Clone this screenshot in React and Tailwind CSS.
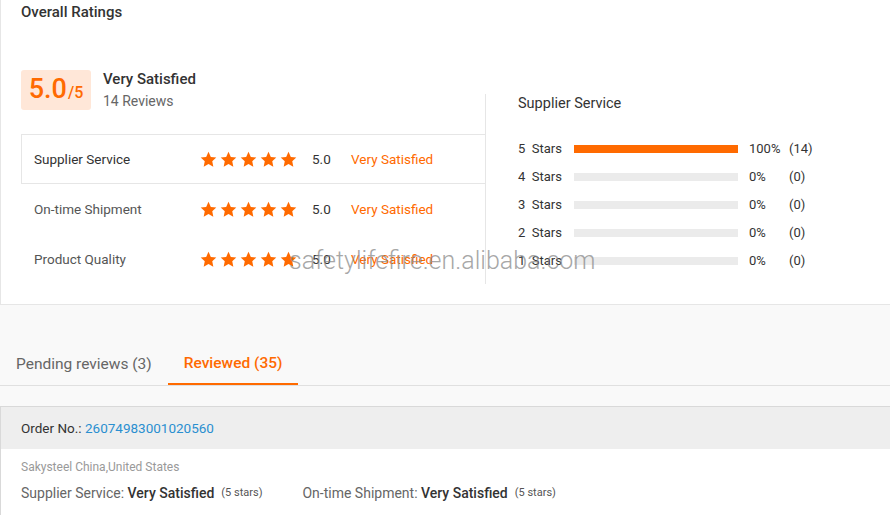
import React from 'react';

const categories = [
  { name: 'Supplier Service', score: '5.0', label: 'Very Satisfied', boxed: true },
  { name: 'On-time Shipment', score: '5.0', label: 'Very Satisfied' },
  { name: 'Product Quality', score: '5.0', label: 'Very Satisfied' },
];

const breakdown = [
  { stars: 5, pct: 100, count: 14 },
  { stars: 4, pct: 0, count: 0 },
  { stars: 3, pct: 0, count: 0 },
  { stars: 2, pct: 0, count: 0 },
  { stars: 1, pct: 0, count: 0 },
];

function Star() {
  return (
    <svg width="17" height="17" viewBox="0 0 24 24" className="shrink-0">
      <path
        fill="#ff6a00"
        d="M12 1.2l3.3 7.1 7.7.9-5.7 5.3 1.5 7.7L12 18.4l-6.8 3.8 1.5-7.7L1 9.2l7.7-.9z"
      />
    </svg>
  );
}

function CategoryRow({ item }) {
  return (
    <div
      className={
        'flex items-center h-[50px] text-[13.5px] ' +
        (item.boxed ? 'border border-[#e6e6e6] pl-[12px]' : 'pl-[13px]')
      }
    >
      <span className={'w-[166px] ' + (item.boxed ? 'text-[#333]' : 'text-[#555]')}>{item.name}</span>
      <div className="flex gap-[3px]">
        {[0, 1, 2, 3, 4].map((i) => (
          <Star key={i} />
        ))}
      </div>
      <span className="ml-[15px] w-[39px] text-[#333]">{item.score}</span>
      <span className="text-[#ff6a00]">{item.label}</span>
    </div>
  );
}

export default function App() {
  return (
    <div className="w-[890px] h-[515px] overflow-hidden bg-[#f9f9f9] relative" style={{ fontFamily: 'Roboto, "Liberation Sans", sans-serif' }}>
      {/* top rating card */}
      <div className="bg-white border-l border-b border-[#e6e6e6] h-[305px]">
        <h2 className="pl-[20px] pt-[2px] text-[15px] leading-5 font-medium text-[#333]">Overall Ratings</h2>
        <div className="flex items-start">
          <div className="ml-[20px] mt-[48px] w-[465px]">
            <div className="flex items-start">
              <div className="w-[70px] h-[40px] rounded-[3px] bg-[#ffe7d8] flex items-baseline justify-center pt-[3px] text-[#ff6a00] font-medium">
                <span className="text-[27px] leading-[32px]">5.0</span>
                <span className="text-[16px] ml-[1px]">/5</span>
              </div>
              <div className="ml-[12px] -mt-[1px]">
                <div className="text-[15px] leading-[20px] font-medium text-[#333]">Very Satisfied</div>
                <div className="text-[14px] leading-[20px] mt-[2px] text-[#666]">14 Reviews</div>
              </div>
            </div>
            <div className="mt-[23px]">
              {categories.map((c) => (
                <CategoryRow key={c.name} item={c} />
              ))}
            </div>
          </div>
          <div className="mt-[72px] -ml-[1px] h-[190px] border-l border-[#e6e6e6] pl-[32px]">
            <div className="text-[14.5px] leading-[18px] pt-[1px] text-[#333]">Supplier Service</div>
            <div className="mt-[22px]">
              {breakdown.map((b) => (
                <div key={b.stars} className="flex items-center h-[28px] text-[13px] text-[#333]">
                  <span className="w-[56px] whitespace-pre">{b.stars + '  Stars'}</span>
                  <div className="w-[164px] h-[8px] bg-[#ebebeb]">
                    <div className="h-full bg-[#ff6a00]" style={{ width: b.pct + '%' }} />
                  </div>
                  <span className="ml-[11px] w-[40px]">{b.pct}%</span>
                  <span>({b.count})</span>
                </div>
              ))}
            </div>
          </div>
        </div>
      </div>

      {/* tabs */}
      <div className="pt-[36px] border-b border-[#e0e0e0] flex text-[15.5px]">
        <div className="pl-[16px] pr-[16px] pt-[3px] h-[44px] flex items-center text-[#666]">Pending reviews (3)</div>
        <div className="px-[16px] pt-[3px] h-[44px] flex items-center font-medium text-[#ff6a00] border-b-2 border-[#ff6a00] -mb-[1px]">
          Reviewed (35)
        </div>
      </div>

      {/* order card */}
      <div className="mt-[20px] bg-white border-t border-l border-[#d9d9d9]">
        <div className="h-[42px] bg-[#eeeeee] flex items-center pl-[20px] text-[13.5px] text-[#333]">
          Order No.:&nbsp;<span className="text-[#2a8fd0]">26074983001020560</span>
        </div>
        <div className="pl-[20px] pt-[11px] pb-[20px]">
          <div className="text-[12px] leading-[14px] text-[#999]">Sakysteel China,United States</div>
          <div className="flex items-center mt-[9px] text-[14px] leading-[20px]">
            <span className="text-[#666]">Supplier Service:&nbsp;</span>
            <span className="text-[#333] font-medium">Very Satisfied</span>
            <span className="ml-[7px] text-[11px] text-[#555]">(5 stars)</span>
            <span className="ml-[40px] text-[#666]">On-time Shipment:&nbsp;</span>
            <span className="text-[#333] font-medium">Very Satisfied</span>
            <span className="ml-[7px] text-[11px] text-[#555]">(5 stars)</span>
          </div>
        </div>
      </div>

      {/* watermark */}
      <div className="absolute left-[289px] top-[242px] text-[25px] font-light text-[#8a8a8a] opacity-75 pointer-events-none whitespace-nowrap">
        safetylifefire.en.alibaba.com
      </div>
    </div>
  );
}
